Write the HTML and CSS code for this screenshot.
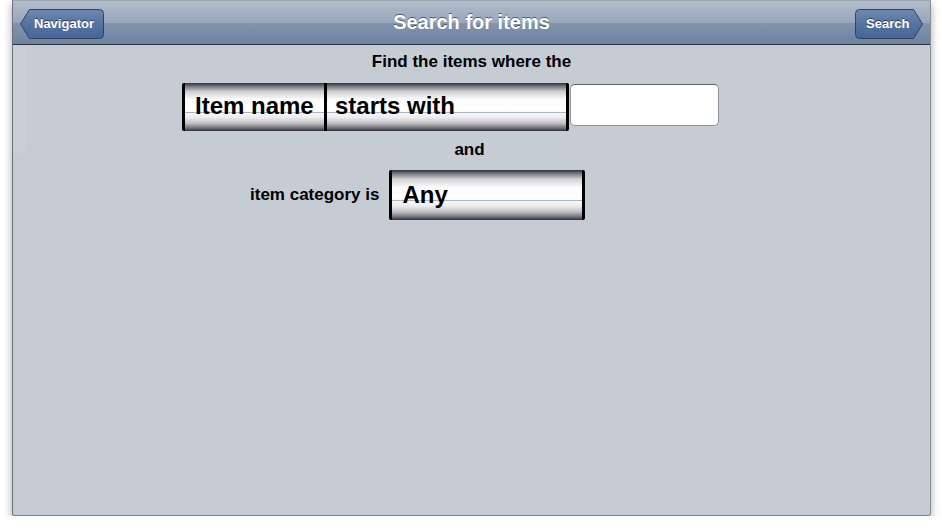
FILE: index.html
```
<!DOCTYPE html>
<html lang="en">
<head>
    <meta charset="UTF-8">
    <title>Search for items</title>
    <link rel="stylesheet" href="styles.css">
</head>
<body>
    <div class="window">
        <div class="side-tab"></div>
        <div class="navbar">
            <button class="nav-btn back">
                <svg class="btn-shape" width="84" height="30" viewBox="0 0 84 30">
                    <defs>
                        <linearGradient id="bg1" x1="0" y1="0" x2="0" y2="1">
                            <stop offset="0" stop-color="#7089b0"/>
                            <stop offset="0.5" stop-color="#55739f"/>
                            <stop offset="1" stop-color="#46659a"/>
                        </linearGradient>
                    </defs>
                    <path d="M9.5 0.5 H79.5 Q83.5 0.5 83.5 4.5 V25.5 Q83.5 29.5 79.5 29.5 H9.5 L0.5 15 Z" fill="url(#bg1)" stroke="#2f4260"/>
                </svg>
                <span>Navigator</span>
            </button>
            <div class="nav-title">Search for items</div>
            <button class="nav-btn fwd">
                <svg class="btn-shape" width="68" height="30" viewBox="0 0 68 30">
                    <defs>
                        <linearGradient id="bg2" x1="0" y1="0" x2="0" y2="1">
                            <stop offset="0" stop-color="#7089b0"/>
                            <stop offset="0.5" stop-color="#55739f"/>
                            <stop offset="1" stop-color="#46659a"/>
                        </linearGradient>
                    </defs>
                    <path d="M4.5 0.5 H58.5 L67.5 15 L58.5 29.5 H4.5 Q0.5 29.5 0.5 25.5 V4.5 Q0.5 0.5 4.5 0.5 Z" fill="url(#bg2)" stroke="#2f4260"/>
                </svg>
                <span>Search</span>
            </button>
        </div>

        <div class="content">
            <div class="line find">Find the items where the</div>
            <div class="row first">
                <div class="picker">
                    <div class="wheel w-field">Item name</div>
                    <div class="wheel w-op">starts with</div>
                </div>
                <input class="text-field" type="text">
            </div>
            <div class="line and">and</div>
            <div class="row second">
                <div class="label">item category is</div>
                <div class="picker tall">
                    <div class="wheel w-cat">Any</div>
                </div>
            </div>
        </div>
    </div>
</body>
</html>
```

FILE: styles.css
```
body {
    margin: 0;
    background: #ffffff;
    font-family: "Liberation Sans", Arial, sans-serif;
    overflow: hidden;
}

.window {
    position: relative;
    margin-left: 12px;
    width: 917px;
    height: 515px;
    background: #c5ccd4;
    border-left: 1px solid #6e7177;
    border-right: 1px solid #8a8d92;
    border-bottom: 1px solid #7d8086;
    border-radius: 0 0 3px 3px;
    box-shadow: 0 4px 9px rgba(0, 0, 0, 0.35);
}

.side-tab {
    position: absolute;
    left: 0; top: 46px;
    width: 13px; height: 108px;
    background: #c8cfd7;
    border-radius: 0 0 4px 0;
}

.navbar {
    height: 43px;
    border-top: 1px solid #9aa3ae;
    border-bottom: 1px solid #2d3540;
    background: linear-gradient(to bottom, #b2bdcc 0%, #97a6ba 50%, #8194ad 52%, #6d83a1 100%);
    display: grid;
    grid-template-columns: 1fr auto 1fr;
    align-items: center;
    padding: 0 7px;
}

.nav-btn {
    position: relative;
    height: 30px;
    padding: 0;
    border: none;
    background: transparent;
    color: #fff;
    font-family: "Liberation Sans", Arial, sans-serif;
    font-weight: bold;
    font-size: 13px;
    text-shadow: 0 -1px 0 rgba(0, 0, 0, 0.5);
    display: flex;
    align-items: center;
    margin-top: 2px;
}
.nav-btn.back { width: 84px; justify-self: start; }
.nav-btn.back span { padding-left: 14px; }
.nav-btn.fwd { width: 68px; justify-self: end; }
.nav-btn.fwd span { padding-left: 11px; }
.nav-btn span { position: relative; }
.btn-shape { position: absolute; left: 0; top: 0; }

.nav-title {
    color: #fff;
    font-weight: bold;
    font-size: 20px;
    text-shadow: 0 -1px 0 rgba(40, 50, 70, 0.7);
}

.content {
    display: flex;
    flex-direction: column;
}

.line {
    font-weight: bold;
    font-size: 17px;
    line-height: 20px;
    color: #000;
    text-align: center;
}
.find { margin-top: 7px; }
.and { margin-top: 9px; padding-right: 4px; }

.row {
    display: flex;
    align-items: flex-start;
}
.row.first { margin-top: 11px; padding-left: 169px; }
.row.second { margin-top: 10px; padding-left: 237px; align-items: center; }

.picker {
    display: flex;
    height: 48px;
    border-left: 3px solid #000;
    border-right: 3px solid #000;
    border-radius: 2px;
    background:
        linear-gradient(#aab5c2, #aab5c2) 0 29px / 100% 1px no-repeat,
        linear-gradient(to bottom, #2f2f36 0%, #77777f 7%, #cfcfd3 18%, #fbfbfb 34%, #ffffff 55%, #ececee 72%, #bdbdc2 84%, #6e6e76 94%, #2f2f36 100%);
}
.picker.tall {
    height: 50px;
    width: 190px;
    background:
        linear-gradient(#aab5c2, #aab5c2) 0 30px / 100% 1px no-repeat,
        linear-gradient(to bottom, #2f2f36 0%, #77777f 7%, #cfcfd3 18%, #fbfbfb 34%, #ffffff 55%, #ececee 72%, #bdbdc2 84%, #6e6e76 94%, #2f2f36 100%);
}

.wheel {
    font-weight: bold;
    font-size: 24px;
    color: #000;
    line-height: 46px;
    padding-left: 10px;
    box-sizing: border-box;
}
.w-field { width: 142px; border-right: 3px solid #000; }
.w-op { width: 239px; padding-left: 8px; }
.w-cat { line-height: 49px; padding-left: 10px; }

.text-field {
    margin: 1px 0 0 1px;
    width: 149px;
    height: 42px;
    box-sizing: border-box;
    border: 1px solid #8d949d;
    border-top-color: #5c636c;
    border-radius: 5px;
    background: #fff;
    outline: none;
}

.label {
    font-weight: bold;
    font-size: 17px;
    margin-right: 10px;
    color: #000;
}
```
